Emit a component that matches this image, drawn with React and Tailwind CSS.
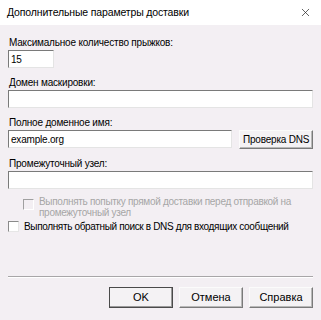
import { X } from 'lucide-react';

const font = { fontFamily: '"Liberation Sans", Arial, sans-serif' };

function Field({ className = '', value = '' }) {
    return (
        <div
            className={`h-[18px] bg-white border border-t-[#7a7a7a] border-l-[#7a7a7a] border-r-[#e4e4e4] border-b-[#e4e4e4] flex items-center px-[2px] text-[10px] tracking-[-0.2px] text-black ${className}`}
        >
            {value}
        </div>
    );
}

function Check({ disabled }) {
    return (
        <span
            className={`block w-[11px] h-[11px] shrink-0 border ${disabled
                ? 'border-t-[#a0a0a0] border-l-[#a0a0a0] border-r-white border-b-white bg-[#f3eff3]'
                : 'border-t-[#8a8a8a] border-l-[#8a8a8a] border-r-[#e6e6e6] border-b-[#e6e6e6] bg-white'
                }`}
        />
    );
}

function Btn({ children, primary }) {
    return (
        <button
            type="button"
            className={`w-[64px] h-[21px] text-[11px] text-black bg-[#f4f2f4] border whitespace-nowrap ${primary
                ? 'border-[#4a4a4a] shadow-[inset_-1px_-1px_0_#9a9a9a]'
                : 'border-t-[#fbfbfb] border-l-[#fbfbfb] border-r-[#7a7a7a] border-b-[#7a7a7a] shadow-[inset_-1px_-1px_0_#b8b8b8]'
                }`}
        >
            {children}
        </button>
    );
}

export default function App() {
    return (
        <div className="w-[321px] h-[320px] bg-[#f3eff3] flex flex-col text-black" style={font}>
            <div className="h-[25px] bg-white flex items-center justify-between pl-[7px] pr-[9px] shrink-0">
                <span className="text-[10.5px] tracking-[-0.15px] leading-none whitespace-nowrap">Дополнительные параметры доставки</span>
                <X className="w-[13px] h-[13px] text-[#222]" strokeWidth={1.3} />
            </div>

            <div className="flex flex-col px-[8px] pt-[11px] text-[10px] tracking-[-0.2px] leading-[13px] whitespace-nowrap">
                <span className="pl-[1px]">Максимальное количество прыжков:</span>
                <Field className="w-[46px] mt-[1px]" value="15" />

                <span className="pl-[1px] mt-[8px]">Домен маскировки:</span>
                <Field className="w-[305px] mt-[1px]" />

                <span className="pl-[1px] mt-[8px]">Полное доменное имя:</span>
                <div className="flex items-start gap-[7px] mt-[1px]">
                    <Field className="w-[225px]" value="example.org" />
                    <button
                        type="button"
                        className="w-[74px] h-[19px] text-[10px] tracking-[-0.2px] whitespace-nowrap bg-[#f4f2f4] border border-t-[#fbfbfb] border-l-[#fbfbfb] border-r-[#7a7a7a] border-b-[#7a7a7a] shadow-[inset_-1px_-1px_0_#b8b8b8]"
                    >
                        Проверка DNS
                    </button>
                </div>

                <span className="pl-[1px] mt-[8px]">Промежуточный узел:</span>
                <Field className="w-[305px] mt-[1px]" />

                <div className="flex items-start gap-[5px] pl-[15px] mt-[7px] text-[#a6a6a6]">
                    <div className="pt-[3px]"><Check disabled /></div>
                    <span className="leading-[11px] tracking-[-0.3px]">Выполнять попытку прямой доставки перед отправкой на<br />промежуточный узел</span>
                </div>

                <div className="flex items-center gap-[5px] mt-[2px]">
                    <Check />
                    <span className="tracking-[-0.35px]">Выполнять обратный поиск в DNS для входящих сообщений</span>
                </div>
            </div>

            <div className="mt-auto px-[8px] pb-[12px]">
                <div className="h-[2px] border-t border-t-[#a8a6a8] border-b border-b-white" />
                <div className="flex justify-end gap-[6px] mt-[9px]">
                    <Btn primary>OK</Btn>
                    <Btn>Отмена</Btn>
                    <Btn>Справка</Btn>
                </div>
            </div>
        </div>
    );
}
